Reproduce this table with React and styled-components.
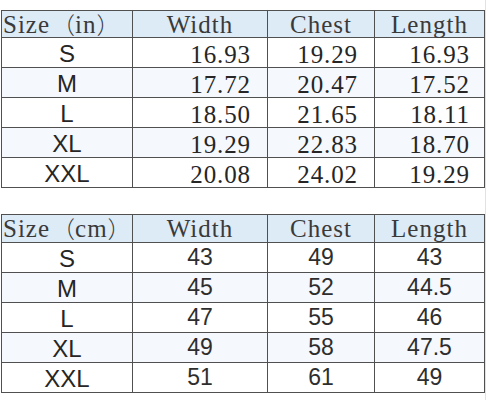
import React from "react";
import styled, { createGlobalStyle } from "styled-components";

const Global = createGlobalStyle`
  html, body { margin: 0; padding: 0; background: #ffffff; }
  body { width: 488px; height: 400px; overflow: hidden; }
`;

const Page = styled.div`
  width: 486px;
  height: 400px;
  padding: 10px 0 0 1px;
  box-sizing: border-box;
  border-right: 1px solid #e2e2e2;
  display: flex;
  flex-direction: column;
  gap: 26px;
`;

const Table = styled.div`
  width: 484px;
  display: grid;
  grid-template-columns: 130px 134px 106px 109px;
  grid-template-rows: ${(p) => p.$headH}px repeat(5, 29px);
  gap: 1px;
  padding: 1px;
  box-sizing: border-box;
  background: #505050;
`;

const HeadCell = styled.div`
  background: #ddebf7;
  color: #3a3a3a;
  font-family: "Liberation Serif", "Noto Sans CJK SC", serif;
  font-size: 25px;
  letter-spacing: 1px;
  line-height: 24px;
  padding-top: ${(p) => p.$pt}px;
  box-sizing: border-box;
  text-align: ${(p) => (p.$left ? "left" : "center")};
  padding-left: ${(p) => (p.$left ? "1px" : "0")};
  white-space: nowrap;
`;

const Paren = styled.span`
  display: inline-block;
  vertical-align: top;
  height: 24px;
  line-height: 22px;
  font-family: "Noto Sans CJK SC", sans-serif;
  font-size: 23px;
  font-weight: 300;
  letter-spacing: 0;
  width: 25px;
  text-align: ${(p) => (p.$open ? "right" : "left")};
`;

const Cell = styled.div`
  background: ${(p) => (p.$tint ? "#f5f8fc" : "#ffffff")};
  color: #262626;
  box-sizing: border-box;
  white-space: nowrap;
  line-height: 29px;
`;

const SizeCell = styled(Cell)`
  font-family: "Liberation Sans", Arial, sans-serif;
  font-size: 24px;
  text-align: center;
  padding-top: 1px;
`;

const InchCell = styled(Cell)`
  font-family: "Liberation Serif", serif;
  font-size: 25px;
  letter-spacing: 0.9px;
  text-align: right;
  padding-right: ${(p) => p.$pr}px;
  padding-top: 2px;
`;

const CmCell = styled(Cell)`
  font-family: "Liberation Sans", Arial, sans-serif;
  font-size: 23px;
  text-align: center;
  color: #2e2e2e;
`;

const sizes = ["S", "M", "L", "XL", "XXL"];

const inches = [
  ["16.93", "19.29", "16.93"],
  ["17.72", "20.47", "17.52"],
  ["18.50", "21.65", "18.11"],
  ["19.29", "22.83", "18.70"],
  ["20.08", "24.02", "19.29"],
];

const cms = [
  ["43", "49", "43"],
  ["45", "52", "44.5"],
  ["47", "55", "46"],
  ["49", "58", "47.5"],
  ["51", "61", "49"],
];

const inchPad = [16, 16, 14];

function Header({ unit, pt }) {
  return (
    <>
      <HeadCell $left $pt={pt}>
        Size<Paren $open>（</Paren>{unit}<Paren>）</Paren>
      </HeadCell>
      <HeadCell $pt={pt}>Width</HeadCell>
      <HeadCell $pt={pt}>Chest</HeadCell>
      <HeadCell $pt={pt}>Length</HeadCell>
    </>
  );
}

export default function App() {
  return (
    <>
      <Global />
      <Page>
        <Table $headH={26}>
          <Header unit="in" pt={2} />
          {sizes.map((s, i) => (
            <React.Fragment key={s}>
              <SizeCell $tint={i % 2 === 1}>{s}</SizeCell>
              {inches[i].map((v, j) => (
                <InchCell key={j} $tint={i % 2 === 1} $pr={inchPad[j]}>
                  {v}
                </InchCell>
              ))}
            </React.Fragment>
          ))}
        </Table>
        <Table $headH={27}>
          <Header unit="cm" pt={2} />
          {sizes.map((s, i) => (
            <React.Fragment key={s}>
              <SizeCell $tint={i % 2 === 1}>{s}</SizeCell>
              {cms[i].map((v, j) => (
                <CmCell key={j} $tint={i % 2 === 1}>
                  {v}
                </CmCell>
              ))}
            </React.Fragment>
          ))}
        </Table>
      </Page>
    </>
  );
}
